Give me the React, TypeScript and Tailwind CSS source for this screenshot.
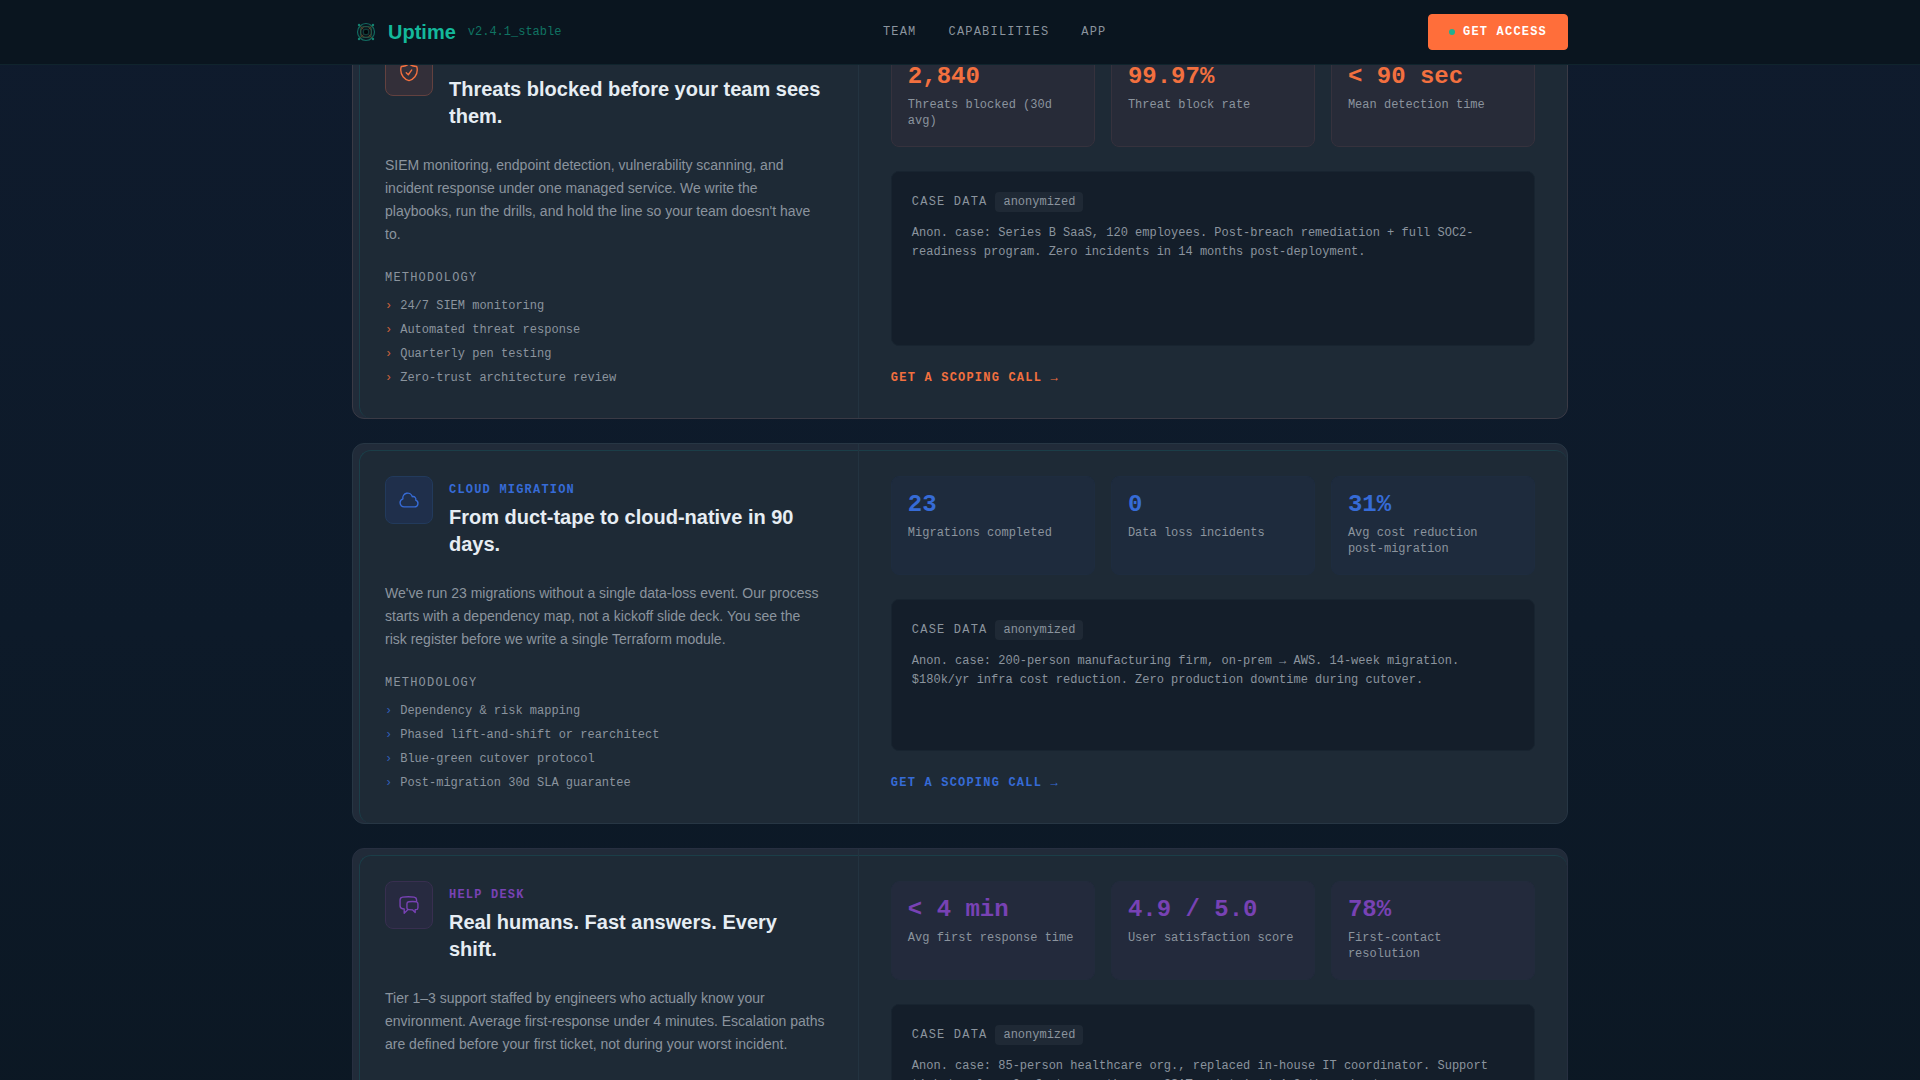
import { clsx } from 'clsx';
import type { IconType } from 'react-icons';
import {
  HiOutlineChatBubbleLeftRight,
  HiOutlineCloud,
  HiOutlineShieldCheck,
} from 'react-icons/hi2';

type Tone = 'orange' | 'blue' | 'purple';

interface Stat {
  value: string;
  label: string;
}

interface Service {
  id: string;
  tone: Tone;
  icon: IconType;
  label: string;
  title: string;
  description: string;
  methodology: string[];
  stats: Stat[];
  caseData: string;
}

const toneStyles: Record<Tone, { text: string; card: string; icon: string; stat: string }> = {
  orange: {
    text: 'text-[#f3703f]',
    card: 'border-[#3a3a45]',
    icon: 'border-[#63413f] bg-[#332f39]',
    stat: 'border-[#36323d] bg-[#272b38]',
  },
  blue: {
    text: 'text-[#366bd6]',
    card: 'border-[#273644]',
    icon: 'border-[#223a5c] bg-[#1f2f4b]',
    stat: 'border-[#1e2c3f] bg-[#1e2b3d]',
  },
  purple: {
    text: 'text-[#7842b4]',
    card: 'border-[#272f40]',
    icon: 'border-[#382f50] bg-[#272a40]',
    stat: 'border-[#222b3c] bg-[#232a3c]',
  },
};

const services: Service[] = [
  {
    id: 'cybersecurity',
    tone: 'orange',
    icon: HiOutlineShieldCheck,
    label: 'Cybersecurity',
    title: 'Threats blocked before your team sees them.',
    description:
      "SIEM monitoring, endpoint detection, vulnerability scanning, and incident response under one managed service. We write the playbooks, run the drills, and hold the line so your team doesn't have to.",
    methodology: [
      '24/7 SIEM monitoring',
      'Automated threat response',
      'Quarterly pen testing',
      'Zero-trust architecture review',
    ],
    stats: [
      { value: '2,840', label: 'Threats blocked (30d avg)' },
      { value: '99.97%', label: 'Threat block rate' },
      { value: '< 90 sec', label: 'Mean detection time' },
    ],
    caseData:
      'Anon. case: Series B SaaS, 120 employees. Post-breach remediation + full SOC2-readiness program. Zero incidents in 14 months post-deployment.',
  },
  {
    id: 'cloud',
    tone: 'blue',
    icon: HiOutlineCloud,
    label: 'Cloud Migration',
    title: 'From duct-tape to cloud-native in 90 days.',
    description:
      "We've run 23 migrations without a single data-loss event. Our process starts with a dependency map, not a kickoff slide deck. You see the risk register before we write a single Terraform module.",
    methodology: [
      'Dependency & risk mapping',
      'Phased lift-and-shift or rearchitect',
      'Blue-green cutover protocol',
      'Post-migration 30d SLA guarantee',
    ],
    stats: [
      { value: '23', label: 'Migrations completed' },
      { value: '0', label: 'Data loss incidents' },
      { value: '31%', label: 'Avg cost reduction post-migration' },
    ],
    caseData:
      'Anon. case: 200-person manufacturing firm, on-prem → AWS. 14-week migration. $180k/yr infra cost reduction. Zero production downtime during cutover.',
  },
  {
    id: 'help-desk',
    tone: 'purple',
    icon: HiOutlineChatBubbleLeftRight,
    label: 'Help Desk',
    title: 'Real humans. Fast answers. Every shift.',
    description:
      'Tier 1–3 support staffed by engineers who actually know your environment. Average first-response under 4 minutes. Escalation paths are defined before your first ticket, not during your worst incident.',
    methodology: [
      'Tiered escalation paths',
      'Named support engineers',
      'Shared ticket dashboard',
      'Monthly service review',
    ],
    stats: [
      { value: '< 4 min', label: 'Avg first response time' },
      { value: '4.9 / 5.0', label: 'User satisfaction score' },
      { value: '78%', label: 'First-contact resolution' },
    ],
    caseData:
      'Anon. case: 85-person healthcare org., replaced in-house IT coordinator. Support tickets close 3x faster month one. CSAT maintained 4.9 throughout.',
  },
];

const navLinks = ['Team', 'Capabilities', 'App'];

const mono = "font-['Liberation_Mono',monospace]";

function Logo() {
  return (
    <svg viewBox="0 0 28 28" className="size-7" fill="none" aria-hidden="true">
      <circle cx="14" cy="14" r="8.5" stroke="#126b60" strokeWidth="1.2" />
      <circle cx="14" cy="14" r="5.5" stroke="#4a4630" strokeWidth="1.2" />
      <circle cx="14" cy="14" r="2.8" fill="#02070b" stroke="#12453f" strokeWidth="1" />
      <path
        d="M7 7q3.500 7 0 14M21 7q-3.500 7 0 14M7 7q7 3.500 14 0M7 21q7-3.500 14 0"
        stroke="#17604f"
        strokeWidth="0.8"
      />
      <path d="M8 8l3.500 3.500M20 8l-3.500 3.500M8 20l3.500-3.500M20 20l-3.500-3.500" stroke="#5e4a2c" strokeWidth="0.8" />
      <g fill="#158270">
        <circle cx="7" cy="7" r="1.200" />
        <circle cx="21" cy="7" r="1.200" />
        <circle cx="7" cy="21" r="1.200" />
        <circle cx="21" cy="21" r="1.200" />
      </g>
    </svg>
  );
}

function Header() {
  return (
    <header className="fixed inset-x-0 top-0 z-20 border-b border-[#10242d] bg-[#0a151f]">
      <div className="mx-auto flex h-16 max-w-7xl items-center justify-between px-8">
        <a href="#top" className="flex items-center gap-2">
          <Logo />
          <span className="flex items-center gap-3">
            <span className="text-xl font-bold text-[#14b89b]">Uptime</span>
            <span className={clsx(mono, 'text-xs text-[#107362]')}>v2.4.1_stable</span>
          </span>
        </a>

        <nav className={clsx(mono, 'flex gap-8 text-xs tracking-widest text-[#8b949e] uppercase')}>
          {navLinks.map((link) => (
            <a key={link} href={`#${link.toLowerCase()}`}>
              {link}
            </a>
          ))}
        </nav>

        <button
          type="button"
          className={clsx(
            mono,
            'flex h-9 items-center gap-2 rounded-sm border border-[#ff6e3a] bg-[#ff6e3a] px-5 text-xs font-bold tracking-widest text-white uppercase',
          )}
        >
          <span className="size-1.5 rounded-full bg-[#20b090]" />
          Get Access
        </button>
      </div>
    </header>
  );
}

function StatCard({ stat, tone }: { stat: Stat; tone: Tone }) {
  const styles = toneStyles[tone];

  return (
    <div className={clsx(mono, 'rounded-lg border px-4 pt-4 pb-[17px]', styles.stat)}>
      <p className={clsx('mb-2 text-2xl leading-6 font-bold', styles.text)}>{stat.value}</p>
      <p className="text-xs leading-4 text-[#8b949e]">{stat.label}</p>
    </div>
  );
}

function ServiceCard({ service }: { service: Service }) {
  const styles = toneStyles[service.tone];
  const Icon = service.icon;

  return (
    <article
      id={service.id}
      className={clsx('relative overflow-hidden rounded-xl border bg-[#212b39]', styles.card)}
    >
      {/* offset inner frame */}
      <div className="absolute top-1.5 right-0 bottom-0 left-1.5 rounded-xl border-t border-l border-[#1b3e48] bg-[#1e2a36]" />

      <div className="relative grid grid-cols-[5fr_7fr]">
        <div className="border-r border-[#233340] p-8">
          <div className="mb-6 flex items-start gap-4">
            <div
              className={clsx(
                'flex size-12 shrink-0 items-center justify-center rounded-lg border',
                styles.icon,
                styles.text,
              )}
            >
              <Icon size={22} />
            </div>
            <div>
              <p className={clsx(mono, 'text-xs leading-7 font-bold tracking-widest uppercase', styles.text)}>
                {service.label}
              </p>
              <h2 className="text-xl leading-[27px] font-bold text-[#e6edf3]">{service.title}</h2>
            </div>
          </div>

          <p className="mb-6 text-sm leading-[23px] text-[#8b949e]">{service.description}</p>

          <h3 className={clsx(mono, 'mb-3 text-xs tracking-widest text-[#8b949e] uppercase')}>Methodology</h3>
          <ul className={clsx(mono, 'space-y-2 text-xs text-[#8b949e]')}>
            {service.methodology.map((item) => (
              <li key={item} className="flex gap-2">
                <span className={clsx('opacity-80', styles.text)}>›</span>
                {item}
              </li>
            ))}
          </ul>
        </div>

        <div className="flex flex-col gap-6 p-8">
          <div className="grid grid-cols-3 gap-4">
            {service.stats.map((stat) => (
              <StatCard key={stat.label} stat={stat} tone={service.tone} />
            ))}
          </div>

          <div className={clsx(mono, 'flex-1 rounded-lg border border-[#182430] bg-[#141e2a] p-5 text-xs text-[#8b949e]')}>
            <div className="mb-3 flex items-center gap-2">
              <span className="tracking-widest uppercase">Case Data</span>
              <span className="rounded-sm bg-[#1f2935] px-2 py-0.5">anonymized</span>
            </div>
            <p className="leading-[19px]">{service.caseData}</p>
          </div>

          <a
            href="#contact"
            className={clsx(mono, 'self-start text-xs font-bold tracking-widest uppercase', styles.text)}
          >
            Get a scoping call →
          </a>
        </div>
      </div>
    </article>
  );
}

export default function App() {
  return (
    <div
      id="top"
      className="min-h-screen bg-linear-to-b from-[#0f1b2d] via-[#0d1a29] to-[#0b1722] pb-6 font-['Liberation_Sans',sans-serif]"
    >
      <Header />
      <main className="mx-auto flex max-w-7xl flex-col gap-6 px-8 pt-[15px]">
        {services.map((service) => (
          <ServiceCard key={service.id} service={service} />
        ))}
      </main>
    </div>
  );
}
